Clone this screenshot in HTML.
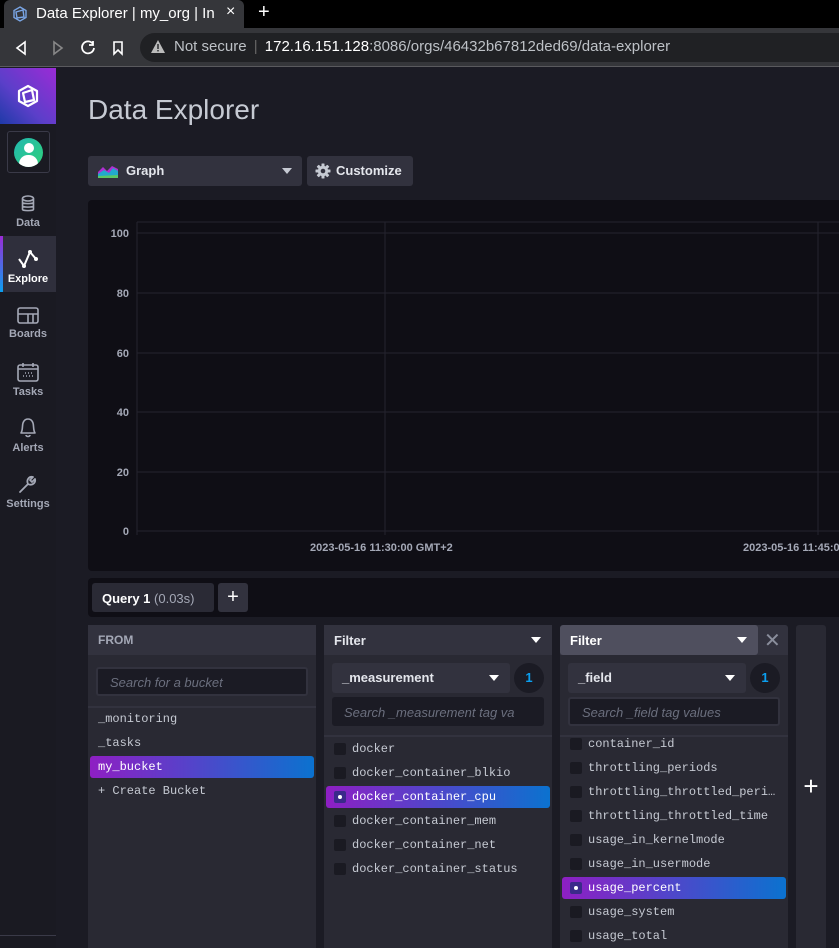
<!DOCTYPE html>
<html><head><style>
*{box-sizing:border-box;margin:0;padding:0}
body{width:839px;height:948px;overflow:hidden;background:#1b1b24;font-family:"Liberation Sans",sans-serif;position:relative;color:#c6cad3}
.abs{position:absolute}
.nav{position:absolute;left:0;width:56px;text-align:center;font-size:11px;font-weight:bold;color:#a4a8b6}
.nav svg{display:block;margin:0 auto 4px}
.item{position:absolute;left:0;right:0;height:22px;line-height:22px;font-size:12px;font-family:"Liberation Mono",monospace;color:#c6cad3}
.cb{position:absolute;left:10px;top:5px;width:12px;height:12px;background:#1a1a22;border-radius:2px}
.sel{background:linear-gradient(90deg,#8e1fc3,#5b3fc9 40%,#0b72cf);color:#fff;border-radius:3px}
.sel .cb{background:#3a2a8a}
.sel .cb:after{content:"";position:absolute;left:4px;top:4px;width:4px;height:4px;border-radius:2px;background:#fff}
.tri{width:0;height:0;border-left:5px solid transparent;border-right:5px solid transparent;border-top:6px solid #fff;position:absolute}
</style></head><body>
<div class="abs" style="left:0;top:0;width:839px;height:28px;background:#000"></div>
<div class="abs" style="left:4px;top:0;width:240px;height:29px;background:#35363a;border-radius:6px 6px 0 0"></div>
<svg class="abs" style="left:12px;top:6px" width="16" height="16" viewBox="0 0 16 16"><path d="M8 1L14 4.5V11.5L8 15L2 11.5V4.5Z M4 6L11 4L12 11L5 12Z" fill="none" stroke="#7aa6e6" stroke-width="1.4"/></svg>
<div class="abs" style="left:36px;top:5px;font-size:15px;color:#fff;white-space:nowrap;width:186px;overflow:hidden">Data Explorer | my_org | In</div>
<div class="abs" style="left:226px;top:3px;font-size:16px;color:#fff">×</div>
<div class="abs" style="left:258px;top:1px;font-size:20px;color:#fff">+</div>
<div class="abs" style="left:0;top:28px;width:839px;height:39px;background:#35363a;border-bottom:1px solid #5a5a5e"></div>
<svg class="abs" style="left:14px;top:39px" width="110" height="18" viewBox="0 0 110 18"><path d="M11 3L3 9L11 15Z" fill="none" stroke="#fff" stroke-width="1.6"/><path d="M40 3L48 9L40 15Z" fill="none" stroke="#888" stroke-width="1.6"/><path d="M79 5A6 6 0 1 0 80 9M79 2V6H75" fill="none" stroke="#fff" stroke-width="1.8"/><path d="M100 3H108V15L104 11L100 15Z" fill="none" stroke="#fff" stroke-width="1.6"/></svg>
<div class="abs" style="left:140px;top:33px;width:699px;height:29px;background:#202124;border-radius:15px 0 0 15px"></div>
<svg class="abs" style="left:151px;top:40px" width="14" height="13" viewBox="0 0 14 13"><path d="M7 0L14 13H0Z" fill="#bbb"/><rect x="6.3" y="4" width="1.4" height="5" fill="#202124"/><rect x="6.3" y="10" width="1.4" height="1.4" fill="#202124"/></svg>
<div class="abs" style="left:174px;top:38px;font-size:15px;color:#bdc1c6;white-space:nowrap">Not secure <span style="color:#666;margin:0 3px">|</span> <span style="color:#fff">172.16.151.128</span>:8086/orgs/46432b67812ded69/data-explorer</div>
<!-- sidebar -->
<div class="abs" style="left:0;top:68px;width:56px;height:880px;background:#1a1a22"></div>
<div class="abs" style="left:0;top:68px;width:56px;height:56px;background:linear-gradient(225deg,#9b2bd6,#5b3fc9 60%,#1e3aa8)"></div>
<svg class="abs" style="left:16px;top:84px" width="24" height="24" viewBox="0 0 24 24"><path d="M12 2L21 7V17L12 22L3 17V7Z M7 9L16 6L18 16L9 18Z M7 9L9 18 M16 6L18 16" fill="none" stroke="#fff" stroke-width="2.2" stroke-linejoin="round"/></svg>
<div class="abs" style="left:7px;top:131px;width:43px;height:42px;border:1px solid #3a3a48;border-radius:3px"></div>
<div class="abs" style="left:14px;top:138px;width:29px;height:29px;border-radius:50%;background:linear-gradient(135deg,#22b8b0,#2fd07a);overflow:hidden"><div style="position:absolute;left:10px;top:5px;width:10px;height:10px;border-radius:50%;background:#fff"></div><div style="position:absolute;left:5px;top:17px;width:19px;height:14px;border-radius:9px 9px 0 0;background:#fff"></div></div>
<div class="nav" style="top:195px"><svg width="14" height="18" viewBox="0 0 14 18"><ellipse cx="7" cy="3.5" rx="5.5" ry="2.5" fill="none" stroke="#a4a8b6" stroke-width="1.6"/><path d="M1.5 3.5V14.5C1.5 16 12.5 16 12.5 14.5V3.5M1.5 7.5C1.5 9 12.5 9 12.5 7.5M1.5 11C1.5 12.5 12.5 12.5 12.5 11" fill="none" stroke="#a4a8b6" stroke-width="1.6"/></svg>Data</div>
<div class="abs" style="left:0;top:236px;width:56px;height:56px;background:#2f2f3c"></div>
<div class="abs" style="left:0;top:236px;width:3px;height:56px;background:linear-gradient(#9b2bd6,#0b9ff0)"></div>
<div class="nav" style="top:249px;color:#fff"><svg width="22" height="20" viewBox="0 0 22 20"><path d="M2 10L7 17L13 3L19 10" fill="none" stroke="#fff" stroke-width="2"/><circle cx="7" cy="17" r="2" fill="#fff"/><circle cx="13" cy="3" r="2" fill="#fff"/><circle cx="19" cy="10" r="2" fill="#fff"/></svg>Explore</div>
<div class="nav" style="top:307px"><svg width="22" height="17" viewBox="0 0 22 17"><rect x="1" y="1" width="20" height="15" rx="2" fill="none" stroke="#a4a8b6" stroke-width="1.6"/><path d="M1 7H21M11 7V16M16 7V16" stroke="#a4a8b6" stroke-width="1.6"/></svg>Boards</div>
<div class="nav" style="top:362px"><svg width="22" height="20" viewBox="0 0 22 20"><rect x="1" y="3" width="20" height="16" rx="2" fill="none" stroke="#a4a8b6" stroke-width="1.6"/><path d="M1 7H21M6 1V5M16 1V5" stroke="#a4a8b6" stroke-width="1.6"/><path d="M8 11h1M11 11h1M14 11h1M6 14h1M9 14h1M12 14h1M15 14h1" stroke="#a4a8b6" stroke-width="1.4"/></svg>Tasks</div>
<div class="nav" style="top:417px"><svg width="20" height="21" viewBox="0 0 20 21"><path d="M3 16C5 13 4 9 5 6C6 3 8 2 10 2C12 2 14 3 15 6C16 9 15 13 17 16Z M8 18C8 20 12 20 12 18" fill="none" stroke="#a4a8b6" stroke-width="1.6" stroke-linejoin="round"/></svg>Alerts</div>
<div class="nav" style="top:474px"><svg width="20" height="20" viewBox="0 0 20 20"><path d="M2 18L10 10M10 10C8 6 11 2 15 3L12 6L14 8L17 5C18 9 14 12 10 10" fill="none" stroke="#a4a8b6" stroke-width="1.8" stroke-linecap="round" stroke-linejoin="round"/></svg>Settings</div>
<div class="abs" style="left:0;top:935px;width:56px;height:1px;background:#3a3a48"></div>
<!-- main -->
<div class="abs" style="left:88px;top:94px;font-size:28px;color:#c6cad3">Data Explorer</div>
<div class="abs" style="left:88px;top:156px;width:214px;height:30px;background:#32323e;border-radius:3px"></div>
<svg class="abs" style="left:98px;top:164px" width="20" height="14" viewBox="0 0 20 14"><path d="M0 8L5 3L9 7L14 2L20 5V14H0Z" fill="#b02fd1"/><path d="M0 10L6 6L11 9L15 4L20 7V14H0Z" fill="#22aacc"/><path d="M0 12L20 11V14H0Z" fill="#5bc766"/></svg>
<div class="abs" style="left:126px;top:163px;font-size:13px;font-weight:bold;color:#e4e6ec">Graph</div>
<div class="tri" style="left:282px;top:168px;border-top-color:#c6cad3"></div>
<div class="abs" style="left:307px;top:156px;width:106px;height:30px;background:#32323e;border-radius:3px"></div>
<svg class="abs" style="left:315px;top:163px" width="16" height="16" viewBox="0 0 16 16"><g fill="#c6cad3"><circle cx="8" cy="8" r="5.2"/><rect x="6.5" y="0.5" width="3" height="15" rx="0.5"/><rect x="0.5" y="6.5" width="15" height="3" rx="0.5"/><rect x="6.5" y="0.5" width="3" height="15" rx="0.5" transform="rotate(45 8 8)"/><rect x="6.5" y="0.5" width="3" height="15" rx="0.5" transform="rotate(-45 8 8)"/></g><circle cx="8" cy="8" r="2.3" fill="#32323e"/></svg>
<div class="abs" style="left:336px;top:163px;font-size:13px;font-weight:bold;color:#e4e6ec">Customize</div>
<!-- graph -->
<div class="abs" style="left:88px;top:200px;width:751px;height:371px;background:#0f0e15;border-radius:4px 0 0 4px"></div>
<svg class="abs" style="left:88px;top:200px" width="751" height="371">
<g stroke="#24242e" stroke-width="1"><line x1="49" y1="22" x2="751" y2="22"/><line x1="49" y1="33" x2="751" y2="33"/><line x1="49" y1="93" x2="751" y2="93"/><line x1="49" y1="153" x2="751" y2="153"/><line x1="49" y1="212" x2="751" y2="212"/><line x1="49" y1="272" x2="751" y2="272"/><line x1="49" y1="331" x2="751" y2="331"/><line x1="49" y1="22" x2="49" y2="335"/><line x1="297" y1="22" x2="297" y2="335"/><line x1="730" y1="22" x2="730" y2="335"/></g>
<g font-family="Liberation Sans" font-size="11" font-weight="bold" fill="#a4a8b6" text-anchor="end"><text x="41" y="37">100</text><text x="41" y="97">80</text><text x="41" y="157">60</text><text x="41" y="216">40</text><text x="41" y="276">20</text><text x="41" y="335">0</text></g>
<g font-family="Liberation Sans" font-size="11" font-weight="bold" fill="#a4a8b6"><text x="222" y="351">2023-05-16 11:30:00 GMT+2</text><text x="655" y="351">2023-05-16 11:45:00</text></g>
</svg>
<div class="abs" style="left:88px;top:578px;width:751px;height:39px;background:#0f0e15;border-radius:4px 0 0 4px"></div>
<div class="abs" style="left:92px;top:583px;width:122px;height:29px;background:#2a2a35;border-radius:3px"></div>
<div class="abs" style="left:102px;top:591px;font-size:13px;font-weight:bold;color:#fff">Query 1 <span style="color:#a4a8b6;font-weight:normal">(0.03s)</span></div>
<div class="abs" style="left:218px;top:583px;width:30px;height:29px;background:#32323e;border-radius:3px;color:#fff;font-size:20px;text-align:center;line-height:28px">+</div>
<!-- FROM -->
<div class="abs" style="left:88px;top:625px;width:228px;height:323px;background:#292933;border-radius:3px 3px 0 0">
 <div style="height:30px;background:#32323e;padding:8px 10px;font-size:12px;font-weight:bold;color:#a4a8b6">FROM</div>
 <div style="position:absolute;left:8px;top:42px;width:212px;height:29px;border:2px solid #32323e;border-radius:3px;background:#1b1b24;padding:6px 12px;font-size:13px;font-style:italic;color:#6b6f7e">Search for a bucket</div>
 <div style="position:absolute;left:0;top:81px;width:228px;height:2px;background:#32323e"></div>
 <div class="item" style="top:83px;padding-left:10px">_monitoring</div>
 <div class="item" style="top:107px;padding-left:10px">_tasks</div>
 <div class="item sel" style="top:131px;left:2px;right:2px;padding-left:8px">my_bucket</div>
 <div class="item" style="top:155px;padding-left:10px">+ Create Bucket</div>
</div>
<!-- Filter 1 -->
<div class="abs" style="left:324px;top:625px;width:228px;height:323px;background:#292933;border-radius:3px 3px 0 0">
 <div style="height:30px;background:#32323e;padding:8px 10px;font-size:13px;font-weight:bold;color:#e4e6ec">Filter</div>
 <div class="tri" style="left:207px;top:12px"></div>
 <div style="position:absolute;left:8px;top:38px;width:178px;height:30px;background:#32323e;border-radius:3px;padding:7px 10px;font-size:13px;font-weight:bold;color:#e4e6ec">_measurement</div>
 <div class="tri" style="left:165px;top:50px"></div>
 <div style="position:absolute;left:190px;top:38px;width:30px;height:30px;border-radius:50%;background:#1b1b24;color:#0b9ff0;font-weight:bold;font-size:13px;text-align:center;line-height:30px">1</div>
 <div style="position:absolute;left:8px;top:72px;width:212px;height:29px;border:2px solid #1b1b24;border-radius:3px;background:#1b1b24;padding:6px 10px;font-size:13px;font-style:italic;color:#6b6f7e;white-space:nowrap;overflow:hidden">Search _measurement tag va</div>
 <div style="position:absolute;left:0;top:110px;width:228px;height:2px;background:#32323e"></div>
 <div class="item" style="top:113px;padding-left:28px"><span class="cb"></span>docker</div>
 <div class="item" style="top:137px;padding-left:28px"><span class="cb"></span>docker_container_blkio</div>
 <div class="item sel" style="top:161px;left:2px;right:2px;padding-left:26px"><span class="cb" style="left:8px"></span>docker_container_cpu</div>
 <div class="item" style="top:185px;padding-left:28px"><span class="cb"></span>docker_container_mem</div>
 <div class="item" style="top:209px;padding-left:28px"><span class="cb"></span>docker_container_net</div>
 <div class="item" style="top:233px;padding-left:28px"><span class="cb"></span>docker_container_status</div>
</div>
<!-- Filter 2 -->
<div class="abs" style="left:560px;top:625px;width:228px;height:323px;background:#292933;border-radius:3px 3px 0 0;overflow:hidden">
 <div style="position:absolute;left:0;top:0;width:228px;height:30px;background:#32323e"></div>
 <div style="position:absolute;left:0;top:0;width:198px;height:30px;background:#4f4f5e;border-radius:3px;padding:8px 10px;font-size:13px;font-weight:bold;color:#fff">Filter</div>
 <div class="tri" style="left:177px;top:12px"></div>
 <div style="position:absolute;left:204px;top:3px;font-size:20px;color:#8a8e9c">✕</div>
 <div style="position:absolute;left:8px;top:38px;width:178px;height:30px;background:#32323e;border-radius:3px;padding:7px 10px;font-size:13px;font-weight:bold;color:#e4e6ec">_field</div>
 <div class="tri" style="left:165px;top:50px"></div>
 <div style="position:absolute;left:190px;top:38px;width:30px;height:30px;border-radius:50%;background:#1b1b24;color:#0b9ff0;font-weight:bold;font-size:13px;text-align:center;line-height:30px">1</div>
 <div style="position:absolute;left:8px;top:72px;width:212px;height:29px;border:2px solid #32323e;border-radius:3px;background:#1b1b24;padding:6px 12px;font-size:13px;font-style:italic;color:#6b6f7e">Search _field tag values</div>
 <div style="position:absolute;left:0;top:110px;width:228px;height:2px;background:#32323e"></div>
 <div class="item" style="top:108px;padding-left:28px"><span class="cb"></span>container_id</div>
 <div class="item" style="top:132px;padding-left:28px"><span class="cb"></span>throttling_periods</div>
 <div class="item" style="top:156px;padding-left:28px"><span class="cb"></span>throttling_throttled_peri…</div>
 <div class="item" style="top:180px;padding-left:28px"><span class="cb"></span>throttling_throttled_time</div>
 <div class="item" style="top:204px;padding-left:28px"><span class="cb"></span>usage_in_kernelmode</div>
 <div class="item" style="top:228px;padding-left:28px"><span class="cb"></span>usage_in_usermode</div>
 <div class="item sel" style="top:252px;left:2px;right:2px;padding-left:26px"><span class="cb" style="left:8px"></span>usage_percent</div>
 <div class="item" style="top:276px;padding-left:28px"><span class="cb"></span>usage_system</div>
 <div class="item" style="top:300px;padding-left:28px"><span class="cb"></span>usage_total</div>
</div>
<div class="abs" style="left:796px;top:625px;width:30px;height:323px;background:#292933;border-radius:3px 3px 0 0;color:#fff;font-size:26px;text-align:center;padding-top:146px">+</div>
</body></html>
